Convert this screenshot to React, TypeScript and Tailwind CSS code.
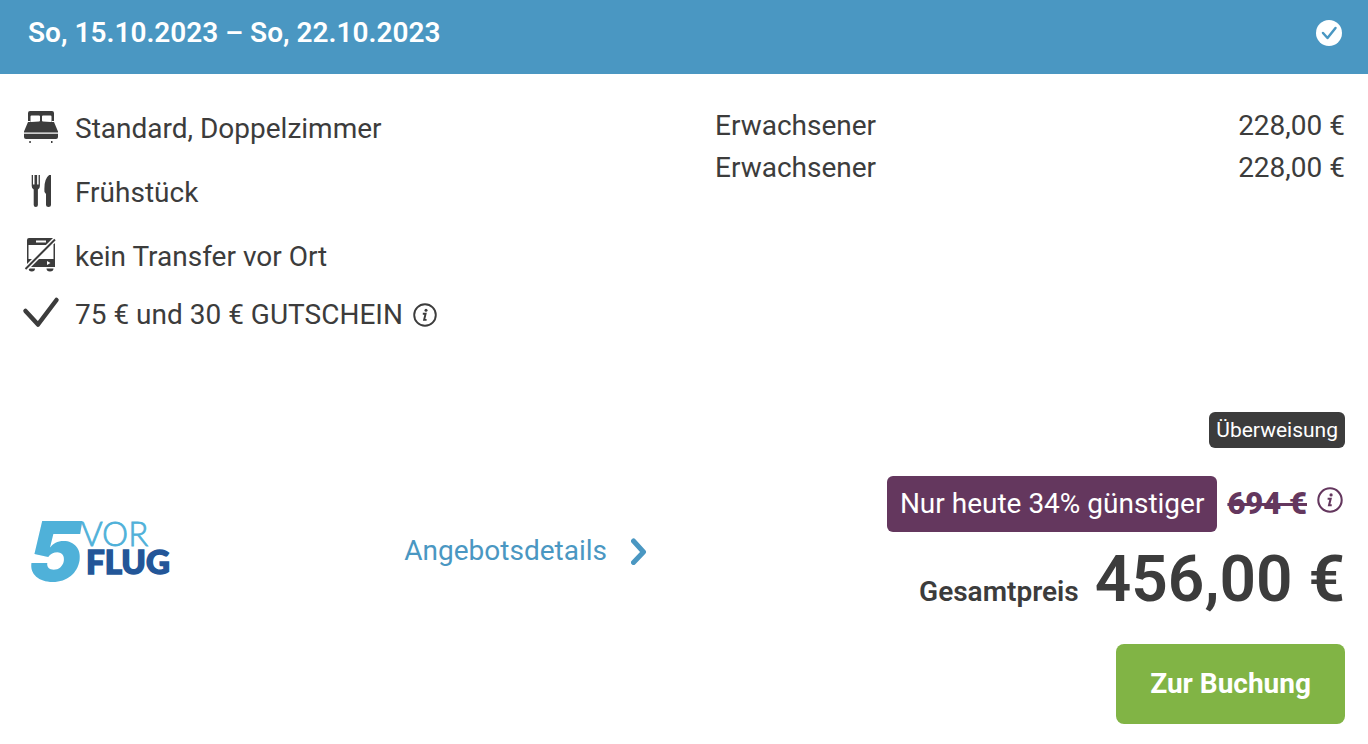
import type { ReactNode } from 'react';

const IconBed = () => (
  <svg viewBox="0 0 36 36" className="size-9" fill="#3c3c3c" aria-hidden="true">
    <path d="M7 0h22q2 0 2 2v9l4 9.500v1H1v-1L5 11V2q0-2 2-2z" />
    <path d="M1 22.700h34v3.300q0 2-2 2H3q-2 0-2-2z" />
    <path d="M8.500 4.500h7.500q1 0 1 1v4q0 1-1 1l-7.700.500q-1 0-.800-1V5.500q0-1 1-1zM20 4.500h7.500q1 0 1 1V10q.200 1-.800 1l-7.700-.500q-1 0-1-1v-4q0-1 1-1z" fill="#fff" />
    <path d="M5 10.500h2.500M28.500 10.500H31" stroke="#fff" strokeWidth="1" />
    <path d="M6.300 30h1.500v2H6.300zM28 30h1.500v2H28z" />
  </svg>
);

const IconMeal = () => (
  <svg viewBox="0 2 36 36" className="size-9" fill="#3c3c3c" aria-hidden="true">
    <path d="M8.700 2h1.300v9.500h1.500V2h2.600v9.500h1.500V2h1.300v11q0 2.500-2 3.500v15.500q0 2-2.100 2t-2.100-2V16.500q-2-1-2-3.500z" />
    <path d="M28 1v31q0 2-2.500 2T23 32V21l-1.500-2Q20.500 4 28 1z" />
  </svg>
);

const IconNoTransfer = () => (
  <svg viewBox="0 3 36 36" className="size-9 overflow-visible" fill="#3c3c3c" aria-hidden="true">
    <path d="M6 2h24q2 0 2 2v27H4V4q0-2 2-2zm-.500 7v14h25V9z" fillRule="evenodd" />
    <rect x="13" y="4.500" width="10" height="2" fill="#fff" />
    <path d="M5.500 32.500h6.500q0 3-3.200 3t-3.300-3zM23.500 32.500h7q0 3-3.500 3t-3.500-3z" />
    <path d="M24 25l3.500 2-3.500 2z" fill="#fff" />
    <path d="M1 34.500L33.500 2" stroke="#fff" strokeWidth="5" />
    <path d="M2.500 33L32 3.500" stroke="#3c3c3c" strokeWidth="2" />
  </svg>
);

const IconCheck = () => (
  <svg viewBox="0 0 36 36" className="size-9 overflow-visible" fill="none" stroke="#3c3c3c" strokeWidth="4.500" strokeLinecap="round" strokeLinejoin="round" aria-hidden="true">
    <path d="M2.500 14L15 27.500L33.500 3" />
  </svg>
);

const IconInfo = ({ className }: { className: string }) => (
  <svg viewBox="0 0 24 24" className={className} fill="none" stroke="currentColor" aria-hidden="true">
    <circle cx="12" cy="12" r="10.800" strokeWidth="1.900" />
    <circle cx="13" cy="7.300" r="1.500" fill="currentColor" stroke="none" />
    <path d="M9.800 10.800h2.800l-1.500 6.100h2.500" strokeWidth="1.900" />
  </svg>
);

const ProviderLogo = () => (
  <svg viewBox="0 0 142 62" className="h-[62px] w-[142px] overflow-visible" role="img" aria-label="5 vor Flug">
    <g fontFamily="Lato, sans-serif">
      <text x="-3" y="61" fontSize="82" fontWeight="900" fontStyle="italic" fontFamily="Inter, sans-serif" fill="#4fb1d9">5</text>
      <text x="50" y="26" fontSize="33" fontWeight="300" fill="#4fb1d9" stroke="#4fb1d9" strokeWidth="0.800">VOR</text>
      <text x="55" y="54" fontSize="33" fontWeight="900" fill="#235698" stroke="#235698" strokeWidth="1.500">FLUG</text>
    </g>
  </svg>
);

const services: { icon: ReactNode; label: string }[] = [
  { icon: <IconBed />, label: 'Standard, Doppelzimmer' },
  { icon: <IconMeal />, label: 'Frühstück' },
  { icon: <IconNoTransfer />, label: 'kein Transfer vor Ort' },
];

const travellers = [
  { name: 'Erwachsener', price: '228,00 €' },
  { name: 'Erwachsener', price: '228,00 €' },
];

const App = () => (
  <article className="bg-white font-['Roboto',sans-serif] text-[28px] leading-[42px] text-[#3c3c3c]">
    <header className="flex items-center justify-between bg-[#4a97c2] pt-3 pr-[26px] pb-5 pl-7 text-white">
      <h2 className="font-semibold">So, 15.10.2023 – So, 22.10.2023</h2>
      <svg viewBox="0 0 26 26" className="size-[26px]" aria-hidden="true">
        <circle cx="13" cy="13" r="13" fill="#fff" />
        <path d="M7 13l4.500 5L19.500 8" fill="none" stroke="#4a97c2" strokeWidth="2.500" strokeLinecap="round" strokeLinejoin="round" />
      </svg>
    </header>

    <div className="grid grid-cols-2 gap-x-8 px-[23px] pt-[31px]">
      <ul>
        {services.map(({ icon, label }) => (
          <li key={label} className="mb-4 flex h-12 items-center gap-4">
            {icon}
            <span>{label}</span>
          </li>
        ))}
        <li className="-mt-1 flex h-11 items-center gap-4">
          <IconCheck />
          <span>75 € und 30 € GUTSCHEIN</span>
          <button type="button" aria-label="Gutschein-Info" className="-ml-1.5">
            <IconInfo className="size-6" />
          </button>
        </li>
      </ul>

      <table className="ml-[15px] self-start">
        <tbody>
          {travellers.map(({ name, price }, index) => (
            <tr key={index}>
              <td className="p-0">{name}</td>
              <td className="p-0 text-right">{price}</td>
            </tr>
          ))}
        </tbody>
      </table>
    </div>

    <div className="mt-[75px] grid grid-cols-2 px-[23px] pb-5">
      <div className="flex items-center justify-between self-start pt-[108px] pr-[37px] pl-2">
        <ProviderLogo />
        <a href="#details" className="flex items-center gap-6 text-[#4a97c2]">
          Angebotsdetails
          <svg viewBox="0 0 16 28" className="h-7 w-4" fill="none" stroke="currentColor" strokeWidth="5" strokeLinecap="round" aria-hidden="true">
            <path d="M2.500 4L12.500 15L2.500 25.500" strokeLinejoin="round" />
          </svg>
        </a>
      </div>

      <div className="flex flex-col items-end">
        <span className="rounded-md bg-[#3c3c3c] px-[7px] text-[21px] leading-9 text-white">Überweisung</span>
        <div className="mt-7 flex items-center">
          <span className="rounded-md bg-[#64375e] px-[13px] leading-[56px] text-white">Nur heute 34% günstiger</span>
          <s className="ml-2.5 text-[31px] font-black text-[#64375e]">694 €</s>
          <button type="button" aria-label="Preis-Info" className="mr-0.5 mb-2 ml-2.5 text-[#64375e]">
            <IconInfo className="size-[26px]" />
          </button>
        </div>
        <p className="mt-2 flex items-baseline gap-4">
          <span className="font-semibold">Gesamtpreis</span>
          <strong className="text-[64px] leading-[80px] font-semibold">456,00 €</strong>
        </p>
        <button type="button" className="mt-6 h-20 rounded-lg bg-[#81b445] px-[34px] font-bold text-white">
          Zur Buchung
        </button>
      </div>
    </div>
  </article>
);

export default App;
